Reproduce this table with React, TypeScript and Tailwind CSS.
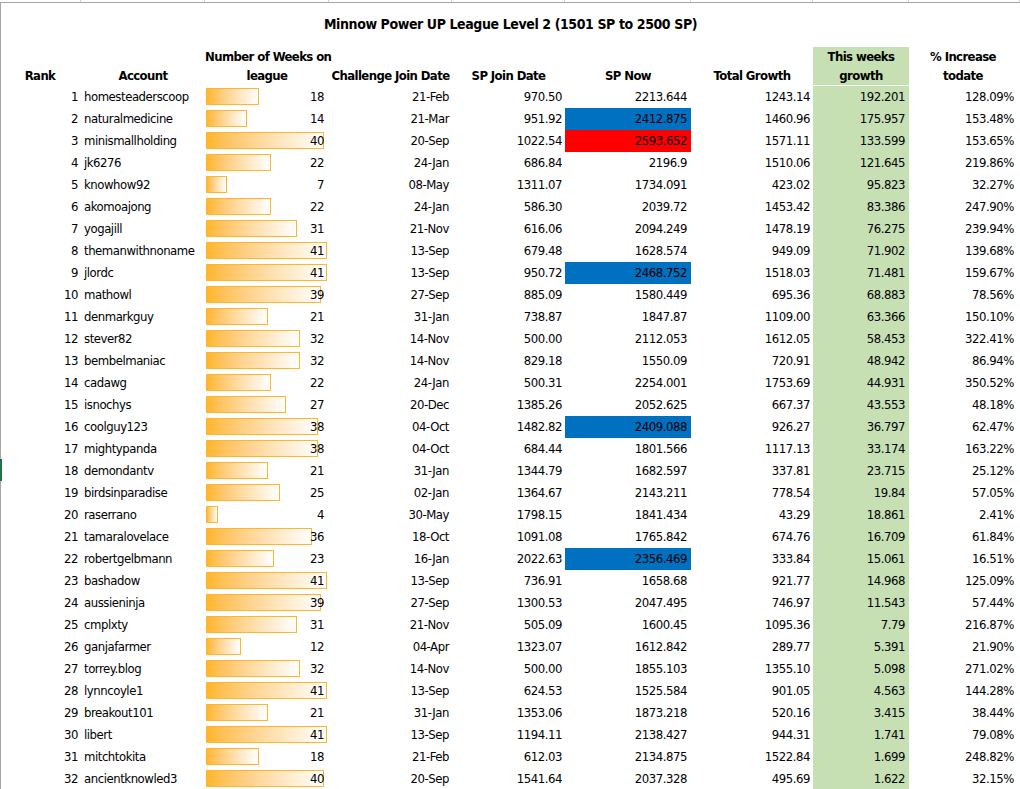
import React from 'react';

type Row = [string, number, string, string, string, string, string, string, string?];

// rank is the index + 1
const rows: Row[] = [
  ['homesteaderscoop', 18, '21-Feb', '970.50', '2213.644', '1243.14', '192.201', '128.09%'],
  ['naturalmedicine', 14, '21-Mar', '951.92', '2412.875', '1460.96', '175.957', '153.48%', 'blue'],
  ['minismallholding', 40, '20-Sep', '1022.54', '2593.652', '1571.11', '133.599', '153.65%', 'red'],
  ['jk6276', 22, '24-Jan', '686.84', '2196.9', '1510.06', '121.645', '219.86%'],
  ['knowhow92', 7, '08-May', '1311.07', '1734.091', '423.02', '95.823', '32.27%'],
  ['akomoajong', 22, '24-Jan', '586.30', '2039.72', '1453.42', '83.386', '247.90%'],
  ['yogajill', 31, '21-Nov', '616.06', '2094.249', '1478.19', '76.275', '239.94%'],
  ['themanwithnoname', 41, '13-Sep', '679.48', '1628.574', '949.09', '71.902', '139.68%'],
  ['jlordc', 41, '13-Sep', '950.72', '2468.752', '1518.03', '71.481', '159.67%', 'blue'],
  ['mathowl', 39, '27-Sep', '885.09', '1580.449', '695.36', '68.883', '78.56%'],
  ['denmarkguy', 21, '31-Jan', '738.87', '1847.87', '1109.00', '63.366', '150.10%'],
  ['stever82', 32, '14-Nov', '500.00', '2112.053', '1612.05', '58.453', '322.41%'],
  ['bembelmaniac', 32, '14-Nov', '829.18', '1550.09', '720.91', '48.942', '86.94%'],
  ['cadawg', 22, '24-Jan', '500.31', '2254.001', '1753.69', '44.931', '350.52%'],
  ['isnochys', 27, '20-Dec', '1385.26', '2052.625', '667.37', '43.553', '48.18%'],
  ['coolguy123', 38, '04-Oct', '1482.82', '2409.088', '926.27', '36.797', '62.47%', 'blue'],
  ['mightypanda', 38, '04-Oct', '684.44', '1801.566', '1117.13', '33.174', '163.22%'],
  ['demondantv', 21, '31-Jan', '1344.79', '1682.597', '337.81', '23.715', '25.12%'],
  ['birdsinparadise', 25, '02-Jan', '1364.67', '2143.211', '778.54', '19.84', '57.05%'],
  ['raserrano', 4, '30-May', '1798.15', '1841.434', '43.29', '18.861', '2.41%'],
  ['tamaralovelace', 36, '18-Oct', '1091.08', '1765.842', '674.76', '16.709', '61.84%'],
  ['robertgelbmann', 23, '16-Jan', '2022.63', '2356.469', '333.84', '15.061', '16.51%', 'blue'],
  ['bashadow', 41, '13-Sep', '736.91', '1658.68', '921.77', '14.968', '125.09%'],
  ['aussieninja', 39, '27-Sep', '1300.53', '2047.495', '746.97', '11.543', '57.44%'],
  ['cmplxty', 31, '21-Nov', '505.09', '1600.45', '1095.36', '7.79', '216.87%'],
  ['ganjafarmer', 12, '04-Apr', '1323.07', '1612.842', '289.77', '5.391', '21.90%'],
  ['torrey.blog', 32, '14-Nov', '500.00', '1855.103', '1355.10', '5.098', '271.02%'],
  ['lynncoyle1', 41, '13-Sep', '624.53', '1525.584', '901.05', '4.563', '144.28%'],
  ['breakout101', 21, '31-Jan', '1353.06', '1873.218', '520.16', '3.415', '38.44%'],
  ['libert', 41, '13-Sep', '1194.11', '2138.427', '944.31', '1.741', '79.08%'],
  ['mitchtokita', 18, '21-Feb', '612.03', '2134.875', '1522.84', '1.699', '248.82%'],
  ['ancientknowled3', 40, '20-Sep', '1541.64', '2037.328', '495.69', '1.622', '32.15%'],
];

const COLS = 'grid grid-cols-[80px_124px_124px_123px_113px_126px_122px_96px_111px]';
const SELECTED = 17;

function SpNow({ value, flag }: { value: string; flag?: string }) {
  const bg = flag === 'blue' ? 'bg-[#0070c0]' : flag === 'red' ? 'bg-[#ff0000]' : '';
  return <div className={`text-right pr-[4px] ${bg}`}>{value}</div>;
}

export default function App() {
  return (
    <div className="w-[1020px] h-[789px] overflow-hidden bg-white text-black font-['DejaVu_Sans_Condensed','Liberation_Sans_Narrow',sans-serif] text-[13px] tracking-[-0.45px]">
      {/* column ticks from the sheet above + frame line */}
      <div className={`${COLS} h-[2px] ml-px`}>
        {Array.from({ length: 9 }).map((_, i) => (
          <div key={i} className="border-r border-[#d0d0d0]" />
        ))}
      </div>
      <div className="h-px bg-[#a6a6a6]" />

      <div className="border-l border-[#a6a6a6] relative">
        <div className="h-[44px] flex items-center justify-center font-bold text-[14px] tracking-[-0.4px] pb-px">
          Minnow Power UP League Level 2 (1501 SP to 2500 SP)
        </div>

        <div className={`${COLS} h-[38px] font-bold leading-[19px] text-center items-end whitespace-nowrap tracking-[-0.6px]`}>
          <div className="pr-[2px]">Rank</div>
          <div>Account</div>
          <div className="flex flex-col">
            <span>Number of Weeks on</span>
            <span>league</span>
          </div>
          <div>Challenge Join Date</div>
          <div>SP Join Date</div>
          <div>SP Now</div>
          <div>Total Growth</div>
          <div className="bg-[#c6e0b4] h-full flex flex-col justify-end">
            <span>This weeks</span>
            <span>growth</span>
          </div>
          <div className="flex flex-col pr-[3px]">
            <span>% Increase</span>
            <span>todate</span>
          </div>
        </div>

        {rows.map((r, i) => (
          <div key={i} className={`${COLS} h-[22px] leading-[22px] pt-px relative`}>
            {i === SELECTED && <div className="absolute -left-px top-0 w-[2px] h-full bg-[#217346]" />}
            <div className="text-right pr-[3px]">{i + 1}</div>
            <div className="pl-[3px] whitespace-nowrap">{r[0]}</div>
            <div className="relative text-right pr-[5px]">
              <div
                className="absolute left-px top-[2px] h-[17px] border border-[#ffb628] bg-linear-to-r from-[#ffb628] to-white"
                style={{ width: Math.round(r[1] * 2.95) }}
              />
              <span className="relative">{r[1]}</span>
            </div>
            <div className="text-right pr-[3px]">{r[2]}</div>
            <div className="text-right pr-[3px]">{r[3]}</div>
            <SpNow value={r[4]} flag={r[8]} />
            <div className="text-right pr-[3px]">{r[5]}</div>
            <div className="text-right pr-[4px] bg-[#c6e0b4]">{r[6]}</div>
            <div className="text-right pr-[6px]">{r[7]}</div>
          </div>
        ))}
      </div>
    </div>
  );
}
